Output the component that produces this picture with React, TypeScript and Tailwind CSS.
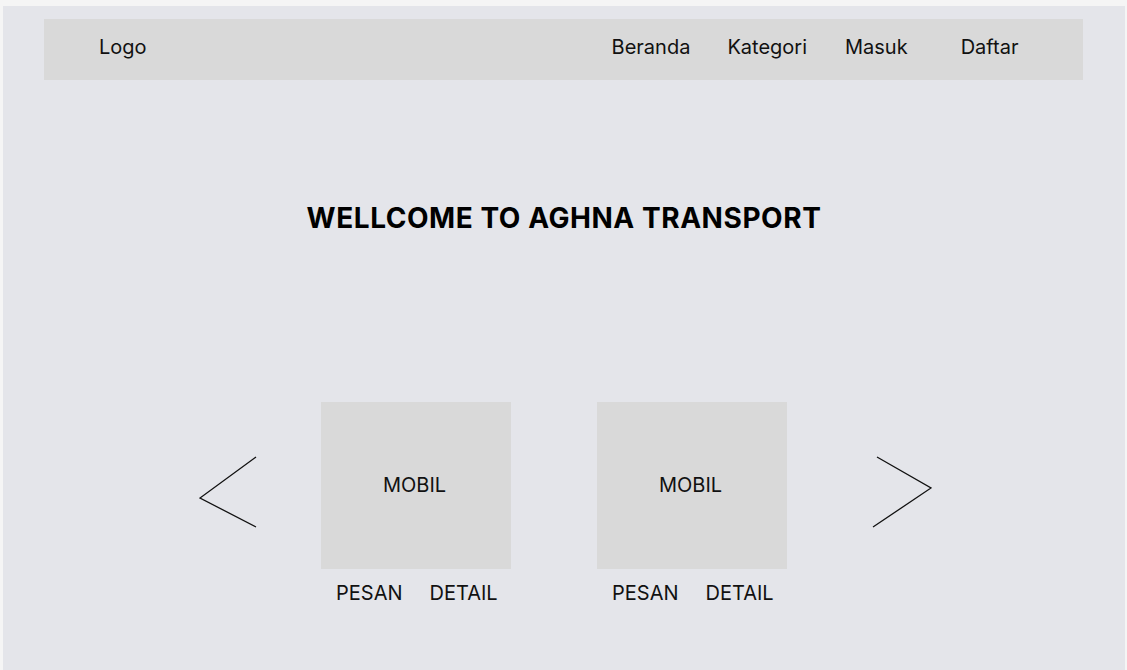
import React from "react";

const navItems = [
  { label: "Beranda", cls: "ml-[465px]" },
  { label: "Kategori", cls: "ml-[37px]" },
  { label: "Masuk", cls: "ml-[38px]" },
  { label: "Daftar", cls: "ml-[53px]" },
];

const CarCard = ({ cls }: { cls: string }) => (
  <div className={"flex flex-col " + cls}>
    <div className="w-[190px] h-[167px] bg-[#d9d9d9] flex items-center justify-center text-[20px] leading-[24px] pb-[2px] pr-[3px]">
      MOBIL
    </div>
    <div className="flex mt-[12px] pl-[15px] text-[20px] leading-[24px]">
      <span>PESAN</span>
      <span className="ml-[27px]">DETAIL</span>
    </div>
  </div>
);

const App = () => {
  return (
    <div
      className="w-full h-[670px] bg-[#f5f5f5] pt-[6px] pl-[3px] pr-[2px] overflow-hidden text-[#111]"
      style={{ fontFamily: "Inter, 'Noto Sans', sans-serif" }}
    >
      <div className="h-full bg-[#e4e5ea] pt-[13px]">
        <nav className="ml-[41px] w-[1039px] h-[61px] bg-[#d9d9d9] flex items-center text-[20px] leading-[24px] pb-[5px]">
          <span className="ml-[55px]">Logo</span>
          {navItems.map((item) => (
            <span key={item.label} className={item.cls}>
              {item.label}
            </span>
          ))}
        </nav>

        <h1 className="mt-[121px] text-center font-bold text-[28px] leading-[34px] tracking-[0.55px] text-black">
          WELLCOME TO AGHNA TRANSPORT
        </h1>

        <div className="flex items-start mt-[167px] pl-[196px]">
          <svg width="58" height="72" viewBox="0 0 58 72" className="mt-[54px]">
            <polyline points="57,1 1,42 57,71" fill="none" stroke="#111" strokeWidth="1.3" />
          </svg>
          <CarCard cls="ml-[64px]" />
          <CarCard cls="ml-[86px]" />
          <svg width="60" height="72" viewBox="0 0 60 72" className="ml-[85px] mt-[54px]">
            <polyline points="5,1 59,32 1,71" fill="none" stroke="#111" strokeWidth="1.3" />
          </svg>
        </div>
      </div>
    </div>
  );
};

export default App;
